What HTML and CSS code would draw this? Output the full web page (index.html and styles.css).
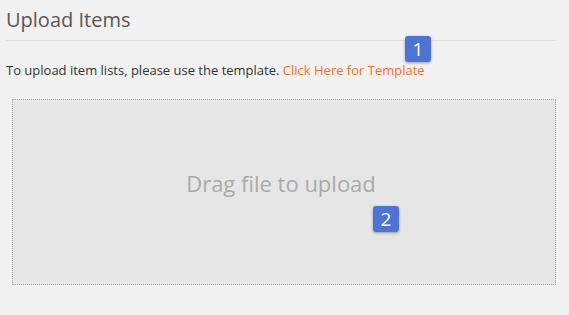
FILE: index.html
```html
<!DOCTYPE html>
<html lang="en">

<head>
  <meta charset="UTF-8">
  <meta name="viewport" content="width=device-width, initial-scale=1.0">
  <title>Upload Items</title>
  <link rel="stylesheet" href="styles.css">
</head>

<body>

  <div class="upload-page">
    <h2 class="page-title">Upload Items</h2>

    <!-- intro with template link -->
    <p class="intro">
      To upload item lists, please use the template.
      <a href="#" class="template-link">Click Here for Template</a>
      <span class="badge badge-one">1</span>
    </p>

    <!-- drop area -->
    <div class="dropzone">
      <div class="dropzone-text">Drag file to upload</div>
      <span class="badge badge-two">2</span>
    </div>
  </div>

</body>

</html>
```

FILE: styles.css
```css
* {
  margin: 0;
  padding: 0;
  box-sizing: border-box;
}

body {
  font-family: "Open Sans", Arial, sans-serif;
  background-color: #f1f1f1;
  color: #333;
}

.upload-page {
  padding: 5px 13px 0 6px;
}

.page-title {
  font-size: 20px;
  font-weight: normal;
  color: #5c5555;
  line-height: 30px;
  padding-bottom: 5px;
  border-bottom: 1px solid #e0e0e0;
}

.intro {
  position: relative;
  font-size: 13px;
  line-height: 18px;
  margin-top: 20px;
}

.template-link {
  color: #ff6d1f;
  text-decoration: none;
}

.badge {
  position: absolute;
  width: 26px;
  height: 26px;
  line-height: 26px;
  text-align: center;
  font-size: 19px;
  color: #fff;
  background-color: #4d73d4;
  border-radius: 3px;
  box-shadow: 0 1px 3px rgba(0, 0, 0, 0.35);
}

.badge-one {
  left: 399px;
  top: -25px;
}

.dropzone {
  position: relative;
  margin: 20px 0 0 6px;
  height: 186px;
  background-color: #e6e6e6;
  border: 1px dotted #aaa;
  display: flex;
  align-items: center;
  justify-content: center;
}

.dropzone-text {
  font-size: 22px;
  color: #aaa;
  margin: -18px 6px 0 0;
}

.badge-two {
  left: 360px;
  top: 106px;
}
```
